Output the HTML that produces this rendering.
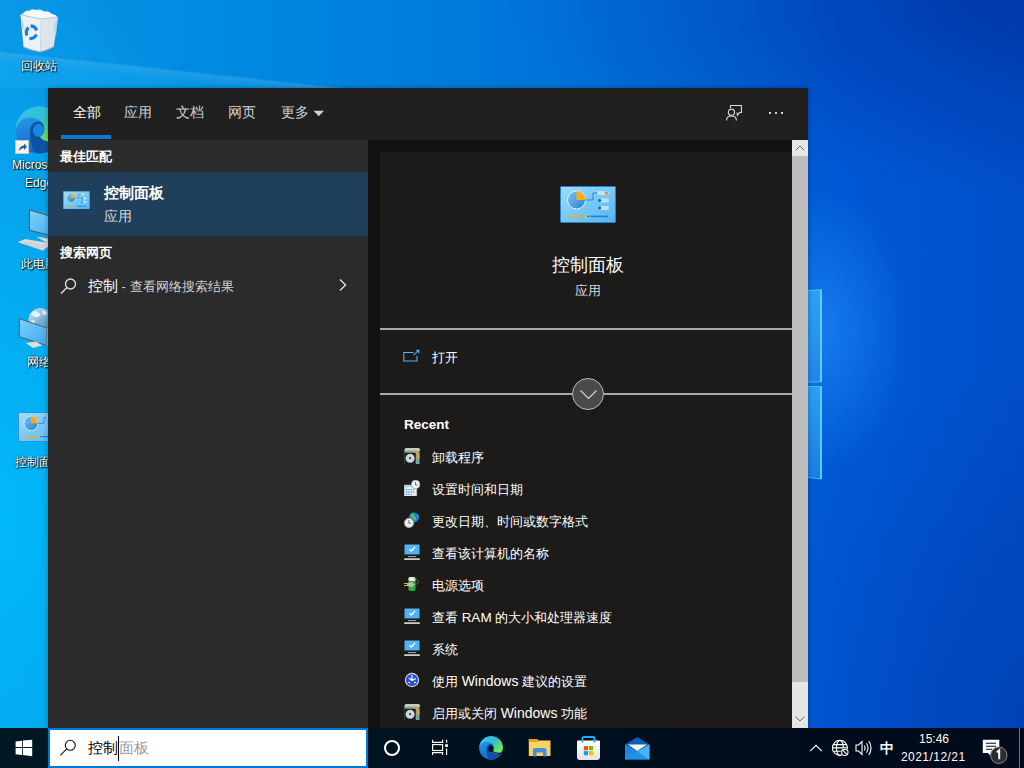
<!DOCTYPE html>
<html><head><meta charset="utf-8">
<style>
*{margin:0;padding:0;box-sizing:border-box}
html,body{width:1024px;height:768px;overflow:hidden}
body{position:relative;font-family:"Liberation Sans",sans-serif;background:#0064d0}
.a{position:absolute}
#bg{left:0;top:0;width:1024px;height:768px;
background:
radial-gradient(ellipse 320px 360px at 1024px 728px, rgba(0,20,110,0.22), rgba(0,20,110,0) 100%),
radial-gradient(ellipse 520px 190px at 1024px 0px, rgba(0,30,130,0.45), rgba(0,30,130,0) 100%),
radial-gradient(ellipse 90px 140px at 822px 330px, rgba(40,150,255,0.55), rgba(40,150,255,0) 100%),
radial-gradient(ellipse 300px 560px at 0px 520px, rgba(0,188,250,0.9), rgba(0,188,250,0.5) 50%, rgba(0,188,250,0) 100%),
linear-gradient(90deg,#0a94e4 0%,#0088e0 25%,#0076da 50%,#0064d6 72%,#0058d6 82%,#004ec8 100%);}
.t{white-space:nowrap;line-height:1}
.lbl{font-size:12px;color:#fff;text-shadow:1px 1px 1px #000,0 0 2px rgba(0,0,0,0.9)}
/* panel */
#panel{left:48px;top:88px;width:760px;height:640px;background:#2b2b2b;box-shadow:0 0 5px rgba(0,0,0,0.3)}
#hdr{left:0;top:0;width:760px;height:52px;background:#202020}
#left{left:0;top:52px;width:320px;height:588px;background:#2b2b2b}
#right{left:320px;top:52px;width:440px;height:588px;background:#121110}
#inner{left:12px;top:12px;width:412px;height:576px;background:#1c1b1a}
#sb{left:424px;top:0;width:16px;height:588px;background:#bdbdbd}
#tb{left:0;top:728px;width:1024px;height:40px;background:linear-gradient(90deg,#021824 0%,#011522 25%,#00101f 55%,#000c1c 80%,#000a1a 100%)}
.c{display:inline-block;width:1em;text-align:center;font-style:normal}
</style></head>
<body>
<svg width="0" height="0" style="position:absolute">
<defs>
<linearGradient id="cpg" x1="0" y1="0" x2="1" y2="1"><stop offset="0" stop-color="#9ddcfb"/><stop offset="1" stop-color="#52b6f2"/></linearGradient>
<linearGradient id="pieg" x1="0" y1="0" x2="1" y2="1"><stop offset="0" stop-color="#7cc4f4"/><stop offset="1" stop-color="#2a7fd0"/></linearGradient>
<symbol id="cp" viewBox="0 0 56 37">
<rect x="0.5" y="0.5" width="55" height="36" rx="1" fill="url(#cpg)" stroke="#2a80d0" stroke-width="1"/>
<circle cx="16.5" cy="14" r="9" fill="url(#pieg)" stroke="#eaf6ff" stroke-width="1"/>
<path d="M16.5 14 V5 A9 9 0 0 1 25.5 14 Z" fill="#f9ac18"/>
<path d="M25.5 14 H33 V7 H38" fill="none" stroke="#2a7fd0" stroke-width="1"/>
<rect x="37" y="5" width="12" height="4" rx="2" fill="#b9e6fc"/>
<rect x="37" y="12.5" width="12" height="4" rx="2" fill="#b9e6fc"/>
<rect x="37" y="20" width="12" height="4" rx="2" fill="#b9e6fc"/>
<circle cx="46.5" cy="7" r="1.8" fill="#f58a1f"/>
<circle cx="39.5" cy="14.5" r="1.8" fill="#1c6fc0"/>
<circle cx="39.5" cy="22" r="1.8" fill="#1c6fc0"/>
<rect x="8" y="29.6" width="20" height="1.6" fill="#f7a81b"/>
<rect x="29" y="29.6" width="19" height="1.6" fill="#1c7fd8"/>
<circle cx="28.5" cy="30.4" r="1.8" fill="#1c7fd8" stroke="#dff" stroke-width="0.6"/>
</symbol>
<symbol id="ic-box" viewBox="0 0 16 16">
<path d="M0.5 1.5 L1.5 0 H15 L16 1.5 V3 H0.5 Z" fill="#c8cac8"/>
<rect x="0.5" y="2.7" width="15" height="13.3" fill="#7fa890"/>
<path d="M9 3.5 Q14.5 3 14.5 8.5 V10" fill="none" stroke="#f0a030" stroke-width="2"/>
<rect x="0.5" y="4.8" width="11.2" height="11.2" fill="#161c20"/>
<circle cx="6.1" cy="10.2" r="4.5" fill="#d4d6d6"/>
<circle cx="6.1" cy="10.2" r="1.1" fill="#3a3a3a"/>
</symbol>
<symbol id="ic-cal" viewBox="0 0 16 16">
<rect x="0.2" y="5" width="12.6" height="11" fill="#e8f0f4" stroke="#b0b8c0" stroke-width="0.5"/>
<rect x="0.5" y="5.2" width="12" height="2" fill="#a8d0ec"/>
<g fill="#3a9ad8"><rect x="2" y="9" width="1.3" height="1.2"/><rect x="4.3" y="9" width="1.3" height="1.2"/><rect x="6.6" y="9" width="1.3" height="1.2"/><rect x="8.9" y="9" width="1.3" height="1.2"/><rect x="2" y="11.3" width="1.3" height="1.2"/><rect x="4.3" y="11.3" width="1.3" height="1.2"/><rect x="6.6" y="11.3" width="1.3" height="1.2"/><rect x="8.9" y="11.3" width="1.3" height="1.2"/><rect x="2" y="13.6" width="1.3" height="1.2"/><rect x="4.3" y="13.6" width="1.3" height="1.2"/><rect x="6.6" y="13.6" width="1.3" height="1.2"/></g>
<circle cx="11.7" cy="4.4" r="4.3" fill="#f4f4f4" stroke="#9a9a9a" stroke-width="0.8"/>
<path d="M11.5 1.8 V5 H13.8" fill="none" stroke="#555" stroke-width="0.8"/>
</symbol>
<symbol id="ic-clk" viewBox="0 0 16 16">
<circle cx="10" cy="5.4" r="5" fill="#1e78d8"/>
<path d="M6.5 3 Q8 0.8 10 1.5 Q9.5 4 11.5 4.5 Q13 6 12 8.5 Q10 8 9 6.5 Q7 6 6.5 3 Z M13 1.8 Q15 3 14.8 5 L13.5 4 Z" fill="#48c848"/>
<circle cx="5" cy="11" r="4.7" fill="#ececec" stroke="#9a9a9a" stroke-width="0.8"/>
<path d="M4.8 8.2 V11.3 H7" fill="none" stroke="#555" stroke-width="0.8"/>
</symbol>
<symbol id="ic-mon" viewBox="0 0 16 16">
<rect x="0" y="0" width="16" height="11" fill="#1a1410"/>
<rect x="0.5" y="0.5" width="15" height="10" fill="#4db4f4"/>
<path d="M5.5 5.2 L7.3 7 L11 3" fill="none" stroke="#fff" stroke-width="1.3"/>
<rect x="4" y="12.3" width="8" height="0.8" fill="#c8d0d8"/>
<rect x="0" y="14.3" width="16" height="1.7" rx="0.8" fill="#c8d0d8"/>
</symbol>
<symbol id="ic-pow" viewBox="0 0 16 16">
<rect x="4.5" y="1" width="7" height="14" rx="2" fill="#28b030"/>
<rect x="4.5" y="1" width="7" height="4" rx="1.5" fill="#e8e8e8"/>
<path d="M3 7 L8 6 L11 8.5 L8 11 L3 10 Z" fill="#b8b8b8"/>
<rect x="0" y="7" width="3" height="1" fill="#e8b020"/><rect x="0" y="9" width="3" height="1" fill="#e8b020"/>
<path d="M11 8.5 Q15 8 14 5 Q13 3 10 2" fill="none" stroke="#707070" stroke-width="0.8"/>
</symbol>
<symbol id="ic-sug" viewBox="0 0 16 16">
<circle cx="8" cy="8" r="7.2" fill="#d0d0d0"/>
<circle cx="8" cy="8" r="6" fill="#2450d0"/>
<path d="M8 3 V8 M5 6 L8 8.5 L12 6.5 M4.5 10 L6 11 M10 11 L12 10" fill="none" stroke="#fff" stroke-width="1.2"/>
</symbol>
</defs></svg>
<div id="bg" class="a"></div>

<div class="a" style="left:0;top:0;width:480px;height:88px;background:linear-gradient(186deg, rgba(0,0,0,0) 0px, rgba(0,0,0,0) 101px, rgba(150,225,255,0.2) 103px, rgba(40,195,255,0.2) 112px, rgba(40,195,255,0.16) 100%)"></div>
<div class="a" style="left:0;top:0;width:48px;height:728px;overflow:visible">
<svg class="a" style="left:0;top:0" width="80" height="500" viewBox="0 0 80 500">
  <defs>
    <linearGradient id="rb" x1="0" y1="0" x2="1" y2="0"><stop offset="0" stop-color="#e6edf2"/><stop offset="0.55" stop-color="#f4f6f8"/><stop offset="1" stop-color="#c8d8e4"/></linearGradient>
    <linearGradient id="scr" x1="0" y1="0" x2="1" y2="1"><stop offset="0" stop-color="#7fd2fc"/><stop offset="1" stop-color="#3aa6f0"/></linearGradient>
  </defs>
  <!-- recycle bin -->
  <path d="M20.4 14.6 L40 19 L40.2 51.6 Q31 50 23.5 46.9 Z" fill="#eef1f4"/>
  <path d="M40 19 L58 17.2 L53.8 46.4 Q47 50 40.2 51.6 Z" fill="#dde4ea"/>
  <path d="M20.4 14.6 L22.5 30 L25 28 Z" fill="#b6d6ee" opacity="0.8"/>
  <path d="M58 17.2 L56 36 L53 30 L55 22 Z" fill="#b0d4ec" opacity="0.8"/>
  <path d="M22 15 Q24 10 30 10.5 Q32 8.3 36 10 Q40 8.5 44 11.5 Q49 10.5 52 14 Q56 14.5 57.5 17.2 L40 19.5 Z" fill="#f6f7f8"/>
  <path d="M20.4 14.6 L40 19 L58 17.2" fill="none" stroke="#a8cce6" stroke-width="1"/>
  <path d="M24 47 Q32 50.5 40.2 51.8 Q48 50 53.8 46.6" fill="none" stroke="#c8b8a8" stroke-width="1"/>
  <g fill="none" stroke="#1a7ee0" stroke-width="3.2">
    <path d="M27 35.5 Q25 31 28.5 27.5"/>
    <path d="M30.5 26.2 Q35 25.5 36.5 30.5"/>
    <path d="M36.5 34.5 Q34 39 29.5 38.5"/>
  </g>
  <!-- edge -->
  <g transform="translate(15,106) scale(2)">
    <circle cx="12" cy="12" r="11.8" fill="url(#eb)"/>
    <path d="M7.5 13 C7.5 9.5 9.5 7.8 12 7.8 C14 7.8 15 9 15 10.5 L15 14 C16 16.5 19 17.2 22.5 16.6 C21 20.5 17 23.8 12 23.8 C9 23.8 7.5 19 7.5 13 Z" fill="#0e52a8"/>
    <path d="M0.3 11.5 C0.8 4.8 6 0.2 12 0.2 C18.6 0.2 23.9 5 23.9 11.5 C23.9 15.2 21.5 17.8 18 17.8 C15 17.8 13 16.6 12.3 15 C14.6 14 15.2 11.5 14.2 9.5 C13 7.2 10.2 5.8 7.2 5.8 C4 5.8 1.6 8 0.3 11.5 Z" fill="url(#ec)"/>
    <ellipse cx="11.8" cy="12.2" rx="2.8" ry="3.3" fill="#1a86e0"/>
  </g>
  <rect x="15.5" y="140.5" width="13" height="13" fill="#f4f4f4" stroke="#c8c8c8" stroke-width="1"/>
  <path d="M19 151 Q19 146 24 145.5 V143.5 L27 146.8 L24 150 V148 Q21 148 19 151 Z" fill="#2a5aa8"/>
  <!-- this pc -->
  <path d="M29.4 209.9 L60 219 V238 L29.4 230.2 Z" fill="url(#scr)" stroke="#50565e" stroke-width="1"/>
  <path d="M36 236.5 L48 238.5 L60 241 L47 243 Z" fill="#d8d8d8"/>
  <path d="M17.9 242.3 L25 239 L52 243.5 L43 250.5 Z" fill="#dcdcdc"/>
  <path d="M22 242 L47 246 M24 244 L45 248" stroke="#bcbcbc" stroke-width="0.6"/>
  <!-- network -->
  <defs><linearGradient id="gl" x1="0" y1="0" x2="1" y2="1"><stop offset="0" stop-color="#d8ecf4"/><stop offset="0.5" stop-color="#7ab6d8"/><stop offset="1" stop-color="#3a80b8"/></linearGradient></defs>
  <circle cx="40.5" cy="320" r="12" fill="url(#gl)"/>
  <path d="M31 314 Q34 310 38 312 L41 315 Q38 318 35 317 Z M42 310 Q46 311 47 314 L43 315 Z M30 321 L34 320 L35 324 Z" fill="#f0f8fc" opacity="0.9"/>
  <path d="M19.3 318.7 L46.5 327.8 V345.5 L19.3 336.7 Z" fill="url(#scr)" stroke="#5a6068" stroke-width="1"/>
  <path d="M46.5 327.8 L48 328.3 V346 L46.5 345.5 Z" fill="#9aa4ac"/>
  <path d="M25.6 343 L36 341.5 L42.3 345.5 L33 348 Z" fill="#dcdcdc"/>
  <!-- control panel -->
  <g transform="translate(18,412)"><svg width="44" height="30" viewBox="0 0 56 37" preserveAspectRatio="none"><use href="#cp"/></svg></g>
</svg>
<div class="a t lbl" style="left:21px;top:60px"><i class="c">回</i><i class="c">收</i><i class="c">站</i></div>
<div class="a t lbl" style="left:12px;top:159px">Microsoft</div>
<div class="a t lbl" style="left:25px;top:177px">Edge</div>
<div class="a t lbl" style="left:21px;top:258px"><i class="c">此</i><i class="c">电</i><i class="c">脑</i></div>
<div class="a t lbl" style="left:27px;top:356px"><i class="c">网</i><i class="c">络</i></div>
<div class="a t lbl" style="left:15px;top:456px"><i class="c">控</i><i class="c">制</i><i class="c">面</i><i class="c">板</i></div>
</div>
<svg class="a" style="left:790px;top:280px" width="40" height="210" viewBox="0 0 40 210">
  <defs><linearGradient id="wp" x1="0" y1="0" x2="0" y2="1"><stop offset="0" stop-color="#38b0f8" stop-opacity="0.75"/><stop offset="1" stop-color="#2a96ee" stop-opacity="0.6"/></linearGradient></defs>
  <path d="M0 12 L31 9.6 V102 H0 Z" fill="url(#wp)"/>
  <path d="M0 106.5 H31 V199 L0 195 Z" fill="url(#wp)"/>
  <path d="M0 12 L31 9.6 V102 H0" fill="none" stroke="#58d4ff" stroke-width="1" opacity="0.7"/>
  <path d="M0 106.5 H31 V199 L0 195" fill="none" stroke="#58d4ff" stroke-width="1" opacity="0.7"/>
  <path d="M31 9.6 V102 M31 106.5 V199" fill="none" stroke="#6ae0ff" stroke-width="1.5"/>
</svg>
<div id="panel" class="a">
  <div id="hdr" class="a">
    <div class="a t" style="left:25px;top:18px;font-size:13.5px;color:#fff"><i class="c">全</i><i class="c">部</i></div>
    <div class="a t" style="left:76px;top:18px;font-size:13.5px;color:#d0d0d0"><i class="c">应</i><i class="c">用</i></div>
    <div class="a t" style="left:128px;top:18px;font-size:13.5px;color:#d0d0d0"><i class="c">文</i><i class="c">档</i></div>
    <div class="a t" style="left:180px;top:18px;font-size:13.5px;color:#d0d0d0"><i class="c">网</i><i class="c">页</i></div>
    <div class="a t" style="left:233px;top:18px;font-size:13.5px;color:#d0d0d0"><i class="c">更</i><i class="c">多</i></div>
    <div class="a" style="left:13px;top:47px;width:50px;height:4px;background:#0a78d4"></div>
    <svg class="a" style="left:265px;top:22px" width="12" height="7" viewBox="0 0 12 7"><path d="M0.5 0.8 H11 L5.75 6.2 Z" fill="#d0d0d0"/></svg>
    <svg class="a" style="left:677px;top:16px" width="18" height="18" viewBox="0 0 18 18"><path d="M5.4 3.9 V1.5 H16.4 V8.5 H14.5 L12.5 11.3 L11.9 8.5" fill="none" stroke="#dcdcdc" stroke-width="1.1"/><circle cx="6.4" cy="8.2" r="3.1" fill="#202020" stroke="#dcdcdc" stroke-width="1.1"/><path d="M1.5 16.6 Q1.5 12 6.4 12 Q11.4 12 11.4 16.6" fill="none" stroke="#dcdcdc" stroke-width="1.1"/></svg>
    <div class="a" style="left:721px;top:24px;width:2px;height:2px;background:#d8d8d8"></div>
    <div class="a" style="left:727px;top:24px;width:2px;height:2px;background:#d8d8d8"></div>
    <div class="a" style="left:733px;top:24px;width:2px;height:2px;background:#d8d8d8"></div>
  </div>
  <div id="left" class="a">
    <div class="a t" style="left:12px;top:10px;font-size:13px;font-weight:bold;color:#fff"><i class="c">最</i><i class="c">佳</i><i class="c">匹</i><i class="c">配</i></div>
    <div class="a" style="left:0;top:32px;width:320px;height:64px;background:#1f3f5b">
      <svg class="a" style="left:14.5px;top:18.5px" width="27" height="18.5" viewBox="0 0 56 37" preserveAspectRatio="none"><use href="#cp"/></svg>
      <div class="a t" style="left:56px;top:13px;font-size:15px;font-weight:bold;color:#fff"><i class="c">控</i><i class="c">制</i><i class="c">面</i><i class="c">板</i></div>
      <div class="a t" style="left:56px;top:37px;font-size:14px;color:#d8d8d8"><i class="c">应</i><i class="c">用</i></div>
    </div>
    <div class="a t" style="left:12px;top:106px;font-size:13px;font-weight:bold;color:#fff"><i class="c">搜</i><i class="c">索</i><i class="c">网</i><i class="c">页</i></div>
    <svg class="a" style="left:12px;top:138px" width="17" height="16" viewBox="0 0 17 16"><circle cx="10.5" cy="6" r="5" fill="none" stroke="#e0e0e0" stroke-width="1.3"/><path d="M7 9.5 L1 15.5" stroke="#e0e0e0" stroke-width="1.4"/></svg>
    <svg class="a" style="left:290px;top:138px" width="10" height="14" viewBox="0 0 10 14"><path d="M2 1.5 L7.5 7 L2 12.5" fill="none" stroke="#e0e0e0" stroke-width="1.4"/></svg>
    <div class="a t" style="left:40px;top:138px;font-size:15px;color:#fff"><i class="c">控</i><i class="c">制</i><span style="font-size:13px;color:#d0d0d0"> - <i class="c">查</i><i class="c">看</i><i class="c">网</i><i class="c">络</i><i class="c">搜</i><i class="c">索</i><i class="c">结</i><i class="c">果</i></span></div>
  </div>
  <div id="right" class="a">
    <div id="inner" class="a">
      <svg class="a" style="left:180px;top:34px" width="56" height="37"><use href="#cp"/></svg>
      <div class="a t" style="left:2px;width:412px;text-align:center;top:104px;font-size:18px;color:#fff"><i class="c">控</i><i class="c">制</i><i class="c">面</i><i class="c">板</i></div>
      <div class="a t" style="left:2px;width:412px;text-align:center;top:132px;font-size:13px;color:#d8d8d8"><i class="c">应</i><i class="c">用</i></div>
      <div class="a" style="left:0;top:176px;width:412px;height:2px;background:#a8a8a8"></div>
      <svg class="a" style="left:23px;top:197px" width="18" height="14" viewBox="0 0 18 14"><path d="M10.6 3.5 H0.8 V11.9 H14 V6.8" fill="none" stroke="#58b0f2" stroke-width="1.05"/><path d="M10.6 6.2 L15.9 1.2 M12.9 1.2 H15.9 V4.2" fill="none" stroke="#58b0f2" stroke-width="1.05"/></svg>
      <div class="a t" style="left:52px;top:199px;font-size:13px;color:#fff"><i class="c">打</i><i class="c">开</i></div>
      <div class="a" style="left:0;top:241px;width:412px;height:2px;background:#a8a8a8"></div>
      <div class="a" style="left:192px;top:226px;width:32px;height:32px;border-radius:50%;background:#4a4a4a;border:1px solid #b8b8b8">
        <svg class="a" style="left:0;top:0" width="30" height="30" viewBox="0 0 30 30"><path d="M7.5 11.5 L15.5 19.5 L23.5 11.5" fill="none" stroke="#d8d8d8" stroke-width="1.1"/></svg>
      </div>
      <div class="a t" style="left:24px;top:266px;font-size:13.5px;font-weight:bold;color:#fff">Recent</div>
      <svg class="a" style="left:24px;top:296px" width="16" height="16"><use href="#ic-box"/></svg>
      <div class="a t" style="left:52px;top:299px;font-size:13px;color:#fff"><i class="c">卸</i><i class="c">载</i><i class="c">程</i><i class="c">序</i></div>
      <svg class="a" style="left:24px;top:328px" width="16" height="16"><use href="#ic-cal"/></svg>
      <div class="a t" style="left:52px;top:331px;font-size:13px;color:#fff"><i class="c">设</i><i class="c">置</i><i class="c">时</i><i class="c">间</i><i class="c">和</i><i class="c">日</i><i class="c">期</i></div>
      <svg class="a" style="left:24px;top:360px" width="16" height="16"><use href="#ic-clk"/></svg>
      <div class="a t" style="left:52px;top:363px;font-size:13px;color:#fff"><i class="c">更</i><i class="c">改</i><i class="c">日</i><i class="c">期</i><i class="c">、</i><i class="c">时</i><i class="c">间</i><i class="c">或</i><i class="c">数</i><i class="c">字</i><i class="c">格</i><i class="c">式</i></div>
      <svg class="a" style="left:24px;top:392px" width="16" height="16"><use href="#ic-mon"/></svg>
      <div class="a t" style="left:52px;top:395px;font-size:13px;color:#fff"><i class="c">查</i><i class="c">看</i><i class="c">该</i><i class="c">计</i><i class="c">算</i><i class="c">机</i><i class="c">的</i><i class="c">名</i><i class="c">称</i></div>
      <svg class="a" style="left:24px;top:424px" width="16" height="16"><use href="#ic-pow"/></svg>
      <div class="a t" style="left:52px;top:427px;font-size:13px;color:#fff"><i class="c">电</i><i class="c">源</i><i class="c">选</i><i class="c">项</i></div>
      <svg class="a" style="left:24px;top:456px" width="16" height="16"><use href="#ic-mon"/></svg>
      <div class="a t" style="left:52px;top:459px;font-size:13px;color:#fff"><i class="c">查</i><i class="c">看</i> <span style="font-size:13.5px">RAM</span> <i class="c">的</i><i class="c">大</i><i class="c">小</i><i class="c">和</i><i class="c">处</i><i class="c">理</i><i class="c">器</i><i class="c">速</i><i class="c">度</i></div>
      <svg class="a" style="left:24px;top:488px" width="16" height="16"><use href="#ic-mon"/></svg>
      <div class="a t" style="left:52px;top:491px;font-size:13px;color:#fff"><i class="c">系</i><i class="c">统</i></div>
      <svg class="a" style="left:24px;top:520px" width="16" height="16"><use href="#ic-sug"/></svg>
      <div class="a t" style="left:52px;top:522px;font-size:13px;color:#fff"><i class="c">使</i><i class="c">用</i> <span style="font-size:14px">Windows</span> <i class="c">建</i><i class="c">议</i><i class="c">的</i><i class="c">设</i><i class="c">置</i></div>
      <svg class="a" style="left:24px;top:552px" width="16" height="16"><use href="#ic-box"/></svg>
      <div class="a t" style="left:52px;top:554px;font-size:13px;color:#fff"><i class="c">启</i><i class="c">用</i><i class="c">或</i><i class="c">关</i><i class="c">闭</i> <span style="font-size:14px">Windows</span> <i class="c">功</i><i class="c">能</i></div>
    </div>
    <div id="sb" class="a">
      <div class="a" style="left:0;top:0;width:16px;height:16px;background:#e6e6e6"><svg class="a" style="left:3px;top:5px" width="10" height="6" viewBox="0 0 10 6"><path d="M0.7 5.3 L5 1 L9.3 5.3" fill="none" stroke="#6a6a6a" stroke-width="1"/></svg></div>
      <div class="a" style="left:0;top:542px;width:16px;height:46px;background:#e6e6e6"><svg class="a" style="left:3px;top:34px" width="10" height="6" viewBox="0 0 10 6"><path d="M0.7 0.7 L5 5 L9.3 0.7" fill="none" stroke="#6a6a6a" stroke-width="1"/></svg></div>
    </div>
  </div>
</div>

<div id="tb" class="a">
  <svg class="a" style="left:15px;top:11px" width="18" height="18" viewBox="0 0 18 18"><path d="M0.6 2.4 L7 1.7 V8 H0.6 Z M7.8 1.6 L17.2 0.8 V8 H7.8 Z M0.6 9 H7 V16 L0.6 15.2 Z M7.8 9 H17.2 V17.2 L7.8 16.1 Z" fill="#fff"/></svg>
  <div class="a" style="left:48px;top:0;width:320px;height:40px;background:#fff;border:2px solid #0078d7">
    <svg class="a" style="left:8px;top:8px" width="18" height="18" viewBox="0 0 18 18"><circle cx="12.3" cy="7.3" r="5" fill="none" stroke="#111" stroke-width="1.1"/><path d="M8.8 10.8 L2.3 17.3" stroke="#111" stroke-width="1.1"/></svg>
    <div class="a t" style="left:38px;top:11px;font-size:14.5px;color:#000"><i class="c">控</i><i class="c">制</i></div>
    <div class="a" style="left:68px;top:6px;width:1.2px;height:25px;background:#000"></div>
    <div class="a t" style="left:69px;top:11px;font-size:14.5px;color:#9a9a9a"><i class="c">面</i><i class="c">板</i></div>
  </div>
  <svg class="a" style="left:383px;top:11px" width="18" height="18" viewBox="0 0 18 18"><circle cx="9" cy="9" r="7" fill="none" stroke="#fff" stroke-width="2"/></svg>
  <svg class="a" style="left:430px;top:10px" width="20" height="18" viewBox="0 0 20 18"><path d="M2.6 1.8 V4.4 H12.6 V1.8 M2.6 17 V14.6 H12.6 V17 M16.6 1.8 V4.8 M16.6 10.4 V17" fill="none" stroke="#fff" stroke-width="1.15"/><rect x="2.6" y="6.6" width="10" height="5.9" fill="none" stroke="#fff" stroke-width="1.15"/><rect x="15.1" y="6.3" width="2.9" height="2.5" fill="#fff"/></svg>
  <svg class="a" style="left:479px;top:8px" width="24" height="24" viewBox="0 0 24 24">
    <defs>
      <linearGradient id="eb" x1="0" y1="0" x2="0.3" y2="1"><stop offset="0" stop-color="#2fa6f0"/><stop offset="1" stop-color="#1168c8"/></linearGradient>
      <linearGradient id="ec" x1="0.2" y1="0" x2="1" y2="0.6"><stop offset="0" stop-color="#36bff4"/><stop offset="0.55" stop-color="#30c2c4"/><stop offset="1" stop-color="#72ea56"/></linearGradient>
    </defs>
    <circle cx="12" cy="12" r="11.8" fill="url(#eb)"/>
    <path d="M7.5 13 C7.5 9.5 9.5 7.8 12 7.8 C14 7.8 15 9 15 10.5 L15 14 C16 16.5 19 17.2 22.5 16.6 C21 20.5 17 23.8 12 23.8 C9 23.8 7.5 19 7.5 13 Z" fill="#0e52a8"/>
    <path d="M0.3 11.5 C0.8 4.8 6 0.2 12 0.2 C18.6 0.2 23.9 5 23.9 11.5 C23.9 15.2 21.5 17.8 18 17.8 C15 17.8 13 16.6 12.3 15 C14.6 14 15.2 11.5 14.2 9.5 C13 7.2 10.2 5.8 7.2 5.8 C4 5.8 1.6 8 0.3 11.5 Z" fill="url(#ec)"/>
    <ellipse cx="11.9" cy="12.8" rx="2.7" ry="3.4" fill="#021320"/><path d="M13.3 15.4 Q17 18 22.3 17" fill="none" stroke="#021320" stroke-width="1.1"/>
  </svg>
  <svg class="a" style="left:528px;top:10px" width="24" height="20" viewBox="0 0 24 20">
    <path d="M0.8 1 H9 L10.5 2.5 H22.5 V18 H0.8 Z" fill="#f9d266"/>
    <path d="M0.8 1 H9 L10.5 2.5 V4 H0.8 Z" fill="#e6a318"/>
    <path d="M5 18.5 V12 Q5 10 7 10 H16.5 Q18.5 10 18.5 12 V18.5 H15 V14.5 H8.5 V18.5 Z" fill="#3f91e0"/>
  </svg>
  <svg class="a" style="left:576px;top:8px" width="25" height="25" viewBox="0 0 25 25">
    <defs><linearGradient id="sg" x1="0" y1="0" x2="0" y2="1"><stop offset="0" stop-color="#ffffff"/><stop offset="1" stop-color="#e4e4e4"/></linearGradient></defs>
    <path d="M1 5.6 Q1 4.6 2 4.6 H23 Q24 4.6 24 5.6 V21 Q24 24 21 24 H4 Q1 24 1 21 Z" fill="url(#sg)"/>
    <path d="M6.5 6.6 V2.6 Q6.5 1 8 1 H17 Q18.5 1 18.5 2.6 V6.6" fill="none" stroke="#22aef2" stroke-width="1.9"/>
    <rect x="7.8" y="10" width="4.2" height="4.2" fill="#f25022"/><rect x="12.9" y="10" width="4.2" height="4.2" fill="#7fba00"/>
    <rect x="7.8" y="15.1" width="4.2" height="4.2" fill="#00a4ef"/><rect x="12.9" y="15.1" width="4.2" height="4.2" fill="#ffb900"/>
  </svg>
  <svg class="a" style="left:625px;top:8.5px" width="25" height="23" viewBox="0 0 25 23">
    <defs><linearGradient id="mg" x1="0" y1="0" x2="1" y2="1"><stop offset="0" stop-color="#1a80d8"/><stop offset="1" stop-color="#2a9cec"/></linearGradient></defs>
    <path d="M0 7.5 L12.2 0 L24.4 7.5 V22.6 H0 Z" fill="#0f5cb8"/>
    <path d="M2.9 7.4 H22 L12.2 14 Z" fill="#f2f2f2"/>
    <path d="M0 7.5 L12.2 14.6 L24.4 7.5 V22.6 H0 Z" fill="url(#mg)"/>
    <path d="M12.2 14.6 L24.4 7.5 V22.6 Z" fill="#48c4fa" opacity="0.75"/>
  </svg>
  <svg class="a" style="left:809px;top:15.5px" width="14" height="8" viewBox="0 0 14 8"><path d="M1.2 7.2 L7 1.3 L12.8 7.2" fill="none" stroke="#fff" stroke-width="1.1"/></svg>
  <svg class="a" style="left:831px;top:11px" width="19" height="18" viewBox="0 0 19 18">
    <circle cx="8.9" cy="8.9" r="7.5" fill="none" stroke="#fff" stroke-width="1.1"/>
    <ellipse cx="8.9" cy="8.9" rx="3.4" ry="7.5" fill="none" stroke="#fff" stroke-width="1.1"/>
    <path d="M2.2 5.6 H15.6 M1.4 8.9 H16.4 M2.2 12.2 H10" stroke="#fff" stroke-width="1.1"/>
    <circle cx="13.8" cy="13.3" r="4.2" fill="#000c1c"/>
    <circle cx="13.8" cy="13.3" r="3.2" fill="none" stroke="#fff" stroke-width="1.1"/>
    <path d="M11.7 11.2 L15.9 15.4" stroke="#fff" stroke-width="1.1"/>
  </svg>
  <svg class="a" style="left:855px;top:12px" width="18" height="16" viewBox="0 0 18 16">
    <path d="M1 5 H3.5 L7 1.5 V14.5 L3.5 11 H1 Z" fill="none" stroke="#fff" stroke-width="1.1"/>
    <path d="M9.3 5.5 Q10.8 8 9.3 10.5 M11.5 3.3 Q14.5 8 11.5 12.7 M13.8 1 Q18.3 8 13.8 15" fill="none" stroke="#fff" stroke-width="1.1"/>
  </svg>
  <div class="a t" style="left:880px;top:13px;font-size:14px;font-weight:bold;color:#fff"><i class="c">中</i></div>
  <div class="a t" style="left:919px;top:5px;font-size:12px;color:#fff">15:46</div>
  <div class="a t" style="left:901px;top:23px;font-size:12px;color:#fff;letter-spacing:0.45px">2021/12/21</div>
  <svg class="a" style="left:982px;top:11px" width="26" height="26" viewBox="0 0 26 26">
    <path d="M0.8 0.8 H17.3 V14 H9 L8 16.2 L6 14 H0.8 Z" fill="#fff"/>
    <path d="M4 4.3 H14 M4 7.3 H14 M4 10.3 H10" stroke="#04101c" stroke-width="1.1"/>
    <circle cx="16.8" cy="16.2" r="8.2" fill="#2a2d33" stroke="#8a8d92" stroke-width="1"/>
    <path d="M14.8 13.3 L17.2 11.3 V20.2" fill="none" stroke="#fff" stroke-width="2"/>
  </svg>
  <div class="a" style="left:1019px;top:0;width:1px;height:40px;background:#6a707c"></div>
</div>
</body></html>
